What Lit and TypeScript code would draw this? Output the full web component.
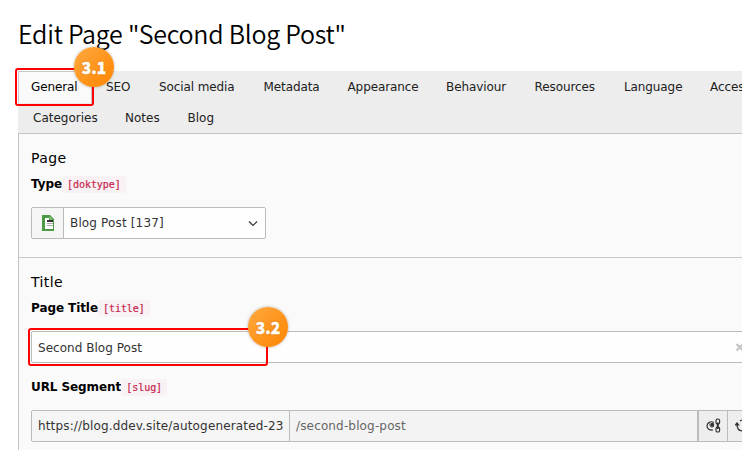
import { LitElement, html, css } from "lit";
import { customElement } from "lit/decorators.js";
import { styleMap } from "lit/directives/style-map.js";

interface Tab {
  label: string;
  width: number;
}

const firstRow: Tab[] = [
  { label: "SEO", width: 53 },
  { label: "Social media", width: 104.5 },
  { label: "Metadata", width: 84 },
  { label: "Appearance", width: 98.5 },
  { label: "Behaviour", width: 88.5 },
  { label: "Resources", width: 89.5 },
  { label: "Language", width: 86 },
  { label: "Access", width: 72 },
];
const secondRow: Tab[] = [
  { label: "Categories", width: 92 },
  { label: "Notes", width: 62.5 },
  { label: "Blog", width: 55 },
];

@customElement("app-root")
export class AppRoot extends LitElement {
  static styles = css`
    :host {
      display: block;
      position: relative;
      width: 742px;
      height: 450px;
      overflow: hidden;
      background: #fff;
      color: #000;
      font: 12px/18px Verdana, "DejaVu Sans", sans-serif;
      white-space: nowrap;
    }
    * { box-sizing: border-box; }
    h1 {
      margin: 0;
      height: 71px;
      padding: 15px 0 0 18px;
      font: 350 25px/36px "Noto Sans CJK SC", sans-serif;
      letter-spacing: -0.26px;
    }
    .tabs {
      height: 62px;
      margin-left: 18px;
      background: #ededed;
      color: #212121;
      overflow: hidden;
    }
    .row { display: flex; height: 31px; letter-spacing: -0.1px; }
    .row.second { padding-left: 1px; letter-spacing: 0; }
    .tab { flex: none; padding: 7px 0 0 14px; }
    .tab.active {
      width: 74px;
      height: 32px;
      padding: 6px 0 0 12px;
      border: 1px solid #c8c8c8;
      border-bottom: 0;
      background: #fafafa;
      color: #000;
    }
    .panel {
      height: 317px;
      width: 760px;
      margin-left: 18px;
      border: 1px solid #c3c3c3;
      border-width: 1px 0 0 1px;
      background: #fafafa;
    }
    .section { padding: 14px 0 0 12px; }
    .section.first { height: 124px; border-bottom: 1px solid #c8c8c8; }
    h2 { margin: 0; font-size: 14px; line-height: 20px; font-weight: 400; letter-spacing: 0.4px; }
    .label { display: flex; align-items: center; height: 18px; margin-top: 7px; font-weight: 700; }
    .label span { letter-spacing: -0.08px; }
    code {
      height: 17px;
      padding: 0 5px;
      border-radius: 3px;
      background: #f9f2f4;
      color: #c7254e;
      font: 400 10px/17px "DejaVu Sans Mono", monospace;
      letter-spacing: -0.05px;
      -webkit-text-stroke: 0.2px #c7254e;
    }
    .group {
      display: flex;
      height: 32px;
      margin-top: 14px;
      border: 1px solid #bbb;
      border-radius: 2px;
      background: #fefefe;
      color: #333;
      line-height: 30px;
      letter-spacing: 0.15px;
    }
    .select { width: 235px; }
    .addon { width: 32px; padding: 7px 0 0 10px; border-right: 1px solid #bbb; background: #f5f5f5; }
    .addon svg, .chevron { display: block; }
    .value { flex: 1; padding-left: 6px; }
    .chevron { margin: 12px 6px 0 0; }
    .text { width: 760px; line-height: 32px; letter-spacing: 0.03px; }
    .clear { margin: 11px 38px 0 0; }
    .text + .label { margin-top: 15px; }
    .slug { width: 760px; background: #f3f3f3; }
    .prefix { width: 258px; padding-left: 6px; border-right: 1px solid #bbb; background: #f5f5f5; }
    .path { width: 409px; padding-left: 6px; border-right: 2px solid #bbb; color: #666; }
    .btn { width: 29px; padding: 7px 0 0 7px; border-right: 1px solid #bbb; background: #eee; }
    .btn svg { display: block; }
    .mark { position: absolute; border: 2px solid #f00; border-radius: 3px; }
    .mark.a { left: 15px; top: 68px; width: 79px; height: 38px; }
    .mark.b { left: 28px; top: 328px; width: 240px; height: 38px; }
    .badge {
      position: absolute;
      width: 40px;
      height: 40px;
      border-radius: 50%;
      background: linear-gradient(135deg, #ffa940, #ff8500);
      box-shadow: 0 0 3px rgba(90, 70, 40, 0.45);
      color: #fff;
      text-align: center;
      font: 900 15.5px/40px "Noto Sans CJK SC", sans-serif;
      -webkit-text-stroke: 0.4px #fff;
      text-shadow: 0 0 2px rgba(130, 70, 0, 0.45);
    }
    .badge.a { left: 74px; top: 47px; }
    .badge.b { left: 248px; top: 307px; }
  `;

  private label(name: string, field: string) {
    return html`<div class="label"><span>${name}</span><code>[${field}]</code></div>`;
  }

  private tab(t: Tab) {
    return html`<div class="tab" style=${styleMap({ width: `${t.width}px` })}>${t.label}</div>`;
  }

  render() {
    return html`
      <h1>Edit Page "Second Blog Post"</h1>
      <div class="tabs">
        <div class="row">
          <div class="tab active">General</div>
          ${firstRow.map((t) => this.tab(t))}
        </div>
        <div class="row second">${secondRow.map((t) => this.tab(t))}</div>
      </div>
      <div class="panel">
        <div class="section first">
          <h2>Page</h2>
          ${this.label("Type", "doktype")}
          <div class="group select">
            <div class="addon">
              <svg width="12" height="16" viewBox="0 0 12 16">
                <path d="M0 0h8l4 4v12H0z" fill="#4b9b45" />
                <path d="M3 3h4v2h4v9H3z" fill="#fff" />
                <path d="M7.500 1v3.500H11z" fill="#8fc788" />
                <path d="M5 5h6v2H5z" fill="#333" />
                <path d="M5 8.500h6M5 10.500h6" stroke="#aaa" />
                <path d="M11 4h1v12h-1z" fill="#4b9b45" />
              </svg>
            </div>
            <span class="value">Blog Post [137]</span>
            <svg class="chevron" width="12" height="8" viewBox="0 0 12 8">
              <path d="M2 1.500l4 4 4-4" fill="none" stroke="#333" stroke-width="1.200" />
            </svg>
          </div>
        </div>
        <div class="section">
          <h2>Title</h2>
          ${this.label("Page Title", "title")}
          <div class="group text">
            <span class="value">Second Blog Post</span>
            <svg class="clear" width="16" height="10" viewBox="0 0 16 10">
              <path d="M.5 1l6.500 6.500M7 1L.5 7.500" stroke="#c4c4c4" stroke-width="2.200" />
            </svg>
          </div>
          ${this.label("URL Segment", "slug")}
          <div class="group slug">
            <span class="prefix">https://blog.ddev.site/autogenerated-23</span>
            <span class="path">/second-blog-post</span>
            <span class="btn">
              <svg width="16" height="16" viewBox="0 0 16 16" fill="none" stroke="#333">
                <path d="M8 4.500C4.500 2.500 1 5 1 8s2.500 4.300 6 4" stroke-width="1.200" />
                <path d="M4 5.500C3.500 9 5.500 10 8 8" />
                <circle cx="6.300" cy="6.700" r="1.900" fill="#333" stroke="none" />
                <rect x="10" y="1" width="3.600" height="5" rx="1.600" stroke-width="1.200" />
                <rect x="10" y="9" width="3.600" height="5" rx="1.600" stroke-width="1.200" />
                <path d="M11.800 4.500v6.500" stroke-width="2" />
              </svg>
            </span>
            <span class="btn">
              <svg width="16" height="16" viewBox="0 0 16 16" fill="none" stroke="#333" stroke-width="1.300">
                <path d="M2 6.500C2 11 4 13 8 13M5 3c1-.8 2-1 3-1 4 0 6 3 6 6" />
                <path d="M-.8 7.500L2 4l2.800 3.500z" fill="#333" stroke="none" />
              </svg>
            </span>
          </div>
        </div>
      </div>
      <div class="mark a"></div>
      <div class="mark b"></div>
      <div class="badge a">3.1</div>
      <div class="badge b">3.2</div>
    `;
  }
}
